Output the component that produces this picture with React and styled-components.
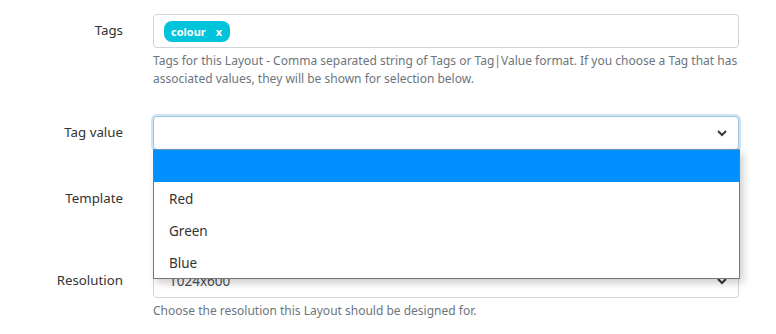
import React from "react";
import styled, { createGlobalStyle } from "styled-components";

const GlobalStyle = createGlobalStyle`
  html, body {
    margin: 0;
    padding: 0;
    background: #fff;
  }
  body {
    font-family: "Noto Sans", "Open Sans", sans-serif;
    color: #333;
  }
`;

const Form = styled.div`
  width: 776px;
  height: 334px;
  padding-top: 14px;
  box-sizing: border-box;
  overflow: hidden;
`;

const Row = styled.div`
  display: grid;
  grid-template-columns: 123px 586px;
  column-gap: 30px;
  margin-bottom: ${(p) => p.$gap || 28}px;
`;

const Label = styled.div`
  text-align: right;
  font-size: 13.3px;
  line-height: 33px;
  color: #333;
`;

const Field = styled.div`
  position: relative;
`;

const Input = styled.div`
  height: 34px;
  box-sizing: border-box;
  border: 1px solid #ced4da;
  border-radius: 4px;
  background: #fff;
  display: flex;
  align-items: center;
  padding: 0 10px;
  font-size: 13.5px;
  color: #495057;
  box-shadow: ${(p) =>
    p.$focus ? "0 0 0 2px rgba(120, 175, 215, 0.35)" : "none"};
  border-color: ${(p) => (p.$focus ? "#9cc6e4" : "#ced4da")};
`;

const SelectText = styled.span`
  flex: 1;
  padding-left: 5px;
`;

const Chevron = styled.svg`
  width: 10px;
  height: 8px;
  margin-right: 1px;
`;

const Chip = styled.span`
  display: inline-flex;
  align-items: center;
  gap: 10px;
  height: 21px;
  padding: 0 8px 0 7px;
  border-radius: 8px;
  background: #00c4dc;
  color: #fff;
  font-size: 11px;
  font-weight: 700;
`;

const Help = styled.div`
  margin-top: 4px;
  font-size: 12px;
  line-height: 18px;
  color: #6c757d;
`;

const Dropdown = styled.div`
  position: absolute;
  top: 33px;
  left: 0;
  width: 587px;
  box-sizing: border-box;
  border: 1px solid #767676;
  border-top-color: #6f93b4;
  background: #fff;
  box-shadow: 3px 4px 8px rgba(0, 0, 0, 0.2);
  z-index: 10;
`;

const Option = styled.div`
  height: 32px;
  line-height: 34px;
  padding-left: 15px;
  font-size: 13.5px;
  color: #333;
  background: ${(p) => (p.$active ? "#0090ff" : "#fff")};
`;

const ChevronIcon = () => (
  <Chevron viewBox="0 0 10 8">
    <path d="M1 2 L5 6 L9 2" fill="none" stroke="#343a40" strokeWidth="2" />
  </Chevron>
);

export default function App() {
  return (
    <>
      <GlobalStyle />
      <Form>
        <Row>
          <Label>Tags</Label>
          <Field>
            <Input>
              <Chip>
                colour <span>x</span>
              </Chip>
            </Input>
            <Help>
              Tags for this Layout - Comma separated string of Tags or
              Tag|Value format. If you choose a Tag that has associated values,
              they will be shown for selection below.
            </Help>
          </Field>
        </Row>
        <Row $gap={32}>
          <Label>Tag value</Label>
          <Field>
            <Input $focus>
              <SelectText />
              <ChevronIcon />
            </Input>
            <Dropdown>
              <Option $active>&nbsp;</Option>
              <Option>Red</Option>
              <Option>Green</Option>
              <Option>Blue</Option>
            </Dropdown>
          </Field>
        </Row>
        <Row $gap={26}>
          <Label>Template</Label>
          <Field>
            <Input>
              <SelectText>Empty</SelectText>
              <ChevronIcon />
            </Input>
            <Help>Choose a template.</Help>
          </Field>
        </Row>
        <Row>
          <Label>Resolution</Label>
          <Field>
            <Input>
              <SelectText>1024x600</SelectText>
              <ChevronIcon />
            </Input>
            <Help>Choose the resolution this Layout should be designed for.</Help>
          </Field>
        </Row>
      </Form>
    </>
  );
}
